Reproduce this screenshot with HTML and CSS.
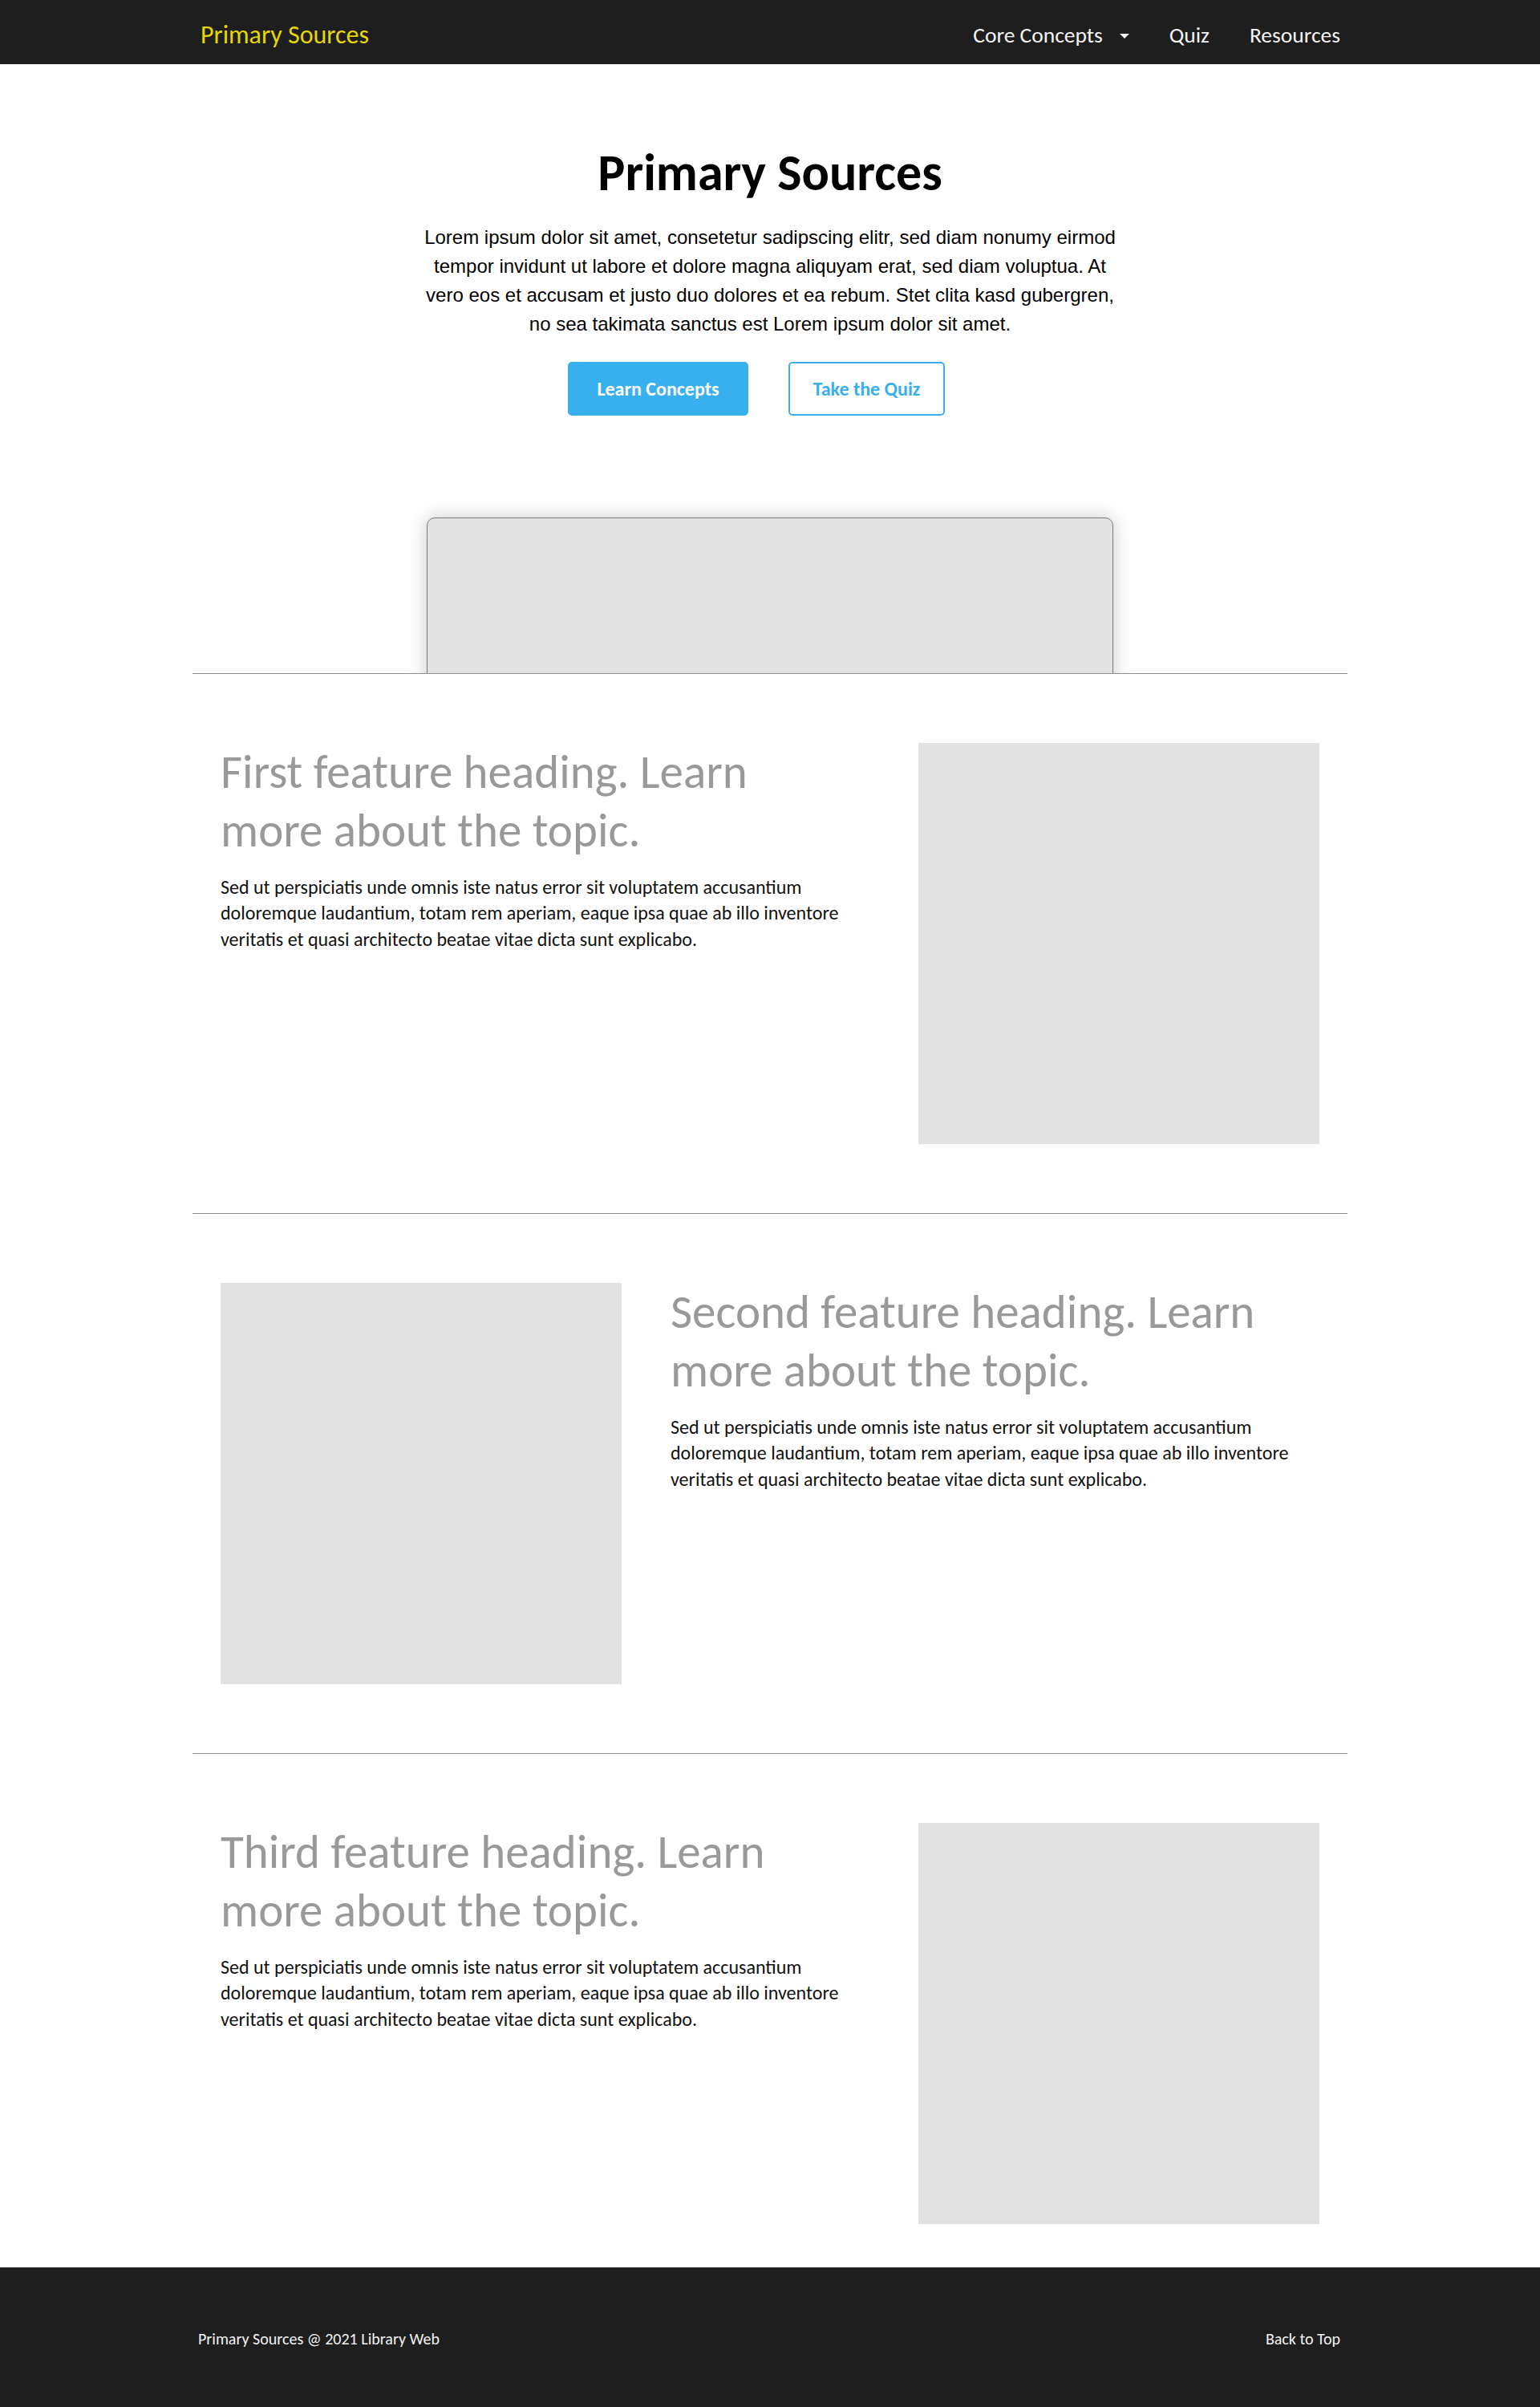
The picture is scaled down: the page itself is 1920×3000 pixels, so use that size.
FILE: index.html
```html
<!DOCTYPE html>
<html lang="en">
<head>
<meta charset="utf-8">
<title>Primary Sources</title>
<link rel="stylesheet" href="styles.css">
</head>
<body>
<header class="navbar">
  <div class="navbar-inner">
    <a class="brand" href="#">Primary Sources</a>
    <nav class="nav">
      <a class="nav-link" href="#">Core Concepts <span class="caret"></span></a>
      <a class="nav-link" href="#">Quiz</a>
      <a class="nav-link" href="#">Resources</a>
    </nav>
  </div>
</header>

<main class="container">
  <section class="hero">
    <h1 class="hero-title">Primary Sources</h1>
    <p class="hero-lead">Lorem ipsum dolor sit amet, consetetur sadipscing elitr, sed diam nonumy eirmod tempor invidunt ut labore et dolore magna aliquyam erat, sed diam voluptua. At vero eos et accusam et justo duo dolores et ea rebum. Stet clita kasd gubergren, no sea takimata sanctus est Lorem ipsum dolor sit amet.</p>
    <div class="hero-actions">
      <a class="btn btn-primary" href="#">Learn Concepts</a>
      <a class="btn btn-outline" href="#">Take the Quiz</a>
    </div>
    <div class="hero-media">
      <div class="hero-card"></div>
    </div>
  </section>

  <section class="feature">
    <div class="feature-text">
      <h2 class="feature-heading">First feature heading. Learn more about the topic.</h2>
      <p class="feature-body">Sed ut perspiciatis unde omnis iste natus error sit voluptatem accusantium doloremque laudantium, totam rem aperiam, eaque ipsa quae ab illo inventore veritatis et quasi architecto beatae vitae dicta sunt explicabo.</p>
    </div>
    <div class="feature-media"></div>
  </section>

  <section class="feature feature-reverse">
    <div class="feature-media"></div>
    <div class="feature-text">
      <h2 class="feature-heading">Second feature heading. Learn more about the topic.</h2>
      <p class="feature-body">Sed ut perspiciatis unde omnis iste natus error sit voluptatem accusantium doloremque laudantium, totam rem aperiam, eaque ipsa quae ab illo inventore veritatis et quasi architecto beatae vitae dicta sunt explicabo.</p>
    </div>
  </section>

  <section class="feature feature-last">
    <div class="feature-text">
      <h2 class="feature-heading">Third feature heading. Learn more about the topic.</h2>
      <p class="feature-body">Sed ut perspiciatis unde omnis iste natus error sit voluptatem accusantium doloremque laudantium, totam rem aperiam, eaque ipsa quae ab illo inventore veritatis et quasi architecto beatae vitae dicta sunt explicabo.</p>
    </div>
    <div class="feature-media"></div>
  </section>
</main>

<footer class="footer">
  <div class="footer-inner">
    <span class="footer-copy">Primary Sources @ 2021 Library Web</span>
    <a class="footer-link" href="#">Back to Top</a>
  </div>
</footer>
</body>
</html>
```

FILE: styles.css
```css
* {
  box-sizing: border-box;
}

html, body {
  margin: 0;
  padding: 0;
}

body {
  background: #ffffff;
  color: #000000;
  font-family: Calibri, Carlito, Lato, "Open Sans", sans-serif;
}

a {
  text-decoration: none;
}

/* ---------- Navbar ---------- */
.navbar {
  background: #1e1e1e;
  height: 80px;
}

.navbar-inner {
  width: 1440px;
  margin: 0 auto;
  height: 80px;
  padding: 7px 9px 0 10px;
  display: flex;
  align-items: center;
  justify-content: space-between;
}

.brand {
  color: #e6d700;
  font-size: 32px;
  line-height: 1;
}

.nav {
  display: flex;
  align-items: center;
  gap: 50px;
}

.nav-link {
  color: #f4f4f4;
  font-size: 27.5px;
  line-height: 1;
  display: flex;
  align-items: center;
}

.caret {
  display: inline-block;
  width: 0;
  height: 0;
  margin-left: 21px;
  margin-top: 2px;
  border-left: 6.5px solid transparent;
  border-right: 6.5px solid transparent;
  border-top: 6.5px solid #f4f4f4;
}

/* ---------- Main ---------- */
.container {
  width: 1440px;
  margin: 0 auto;
}

.hero {
  padding-top: 97px;
  text-align: center;
  border-bottom: 1px solid #8c8c8c;
}

.hero-title {
  margin: 0;
  font-size: 64px;
  line-height: 1.2;
  font-weight: 700;
  color: #000;
}

.hero-lead {
  width: 866px;
  margin: 24px auto 0;
  font-family: "Liberation Sans", Arial, sans-serif;
  font-size: 24px;
  line-height: 36px;
  color: #000;
}

.hero-actions {
  display: flex;
  justify-content: center;
  gap: 50px;
  margin-top: 29px;
  padding-right: 34px;
}

.btn {
  display: flex;
  align-items: center;
  justify-content: center;
  height: 67px;
  border-radius: 5px;
  font-size: 24px;
  font-weight: 700;
  border: 2px solid #39b0ee;
}

.btn-primary {
  width: 225px;
  background: #39b0ee;
  color: #ffffff;
}

.btn-outline {
  width: 195px;
  background: #ffffff;
  color: #39b0ee;
}

.hero-media {
  height: 321px;
  padding-top: 127px;
  overflow: hidden;
  display: flex;
  justify-content: center;
}

.hero-card {
  width: 856px;
  height: 400px;
  flex: none;
  background: #e2e2e2;
  border: 1px solid #7d7d7d;
  border-radius: 10px;
  box-shadow: 0 0 22px rgba(0, 0, 0, 0.22);
}

/* ---------- Features ---------- */
.feature {
  display: grid;
  grid-template-columns: 809px 500px;
  column-gap: 61px;
  padding: 86px 35px 86px;
  border-bottom: 1px solid #8c8c8c;
}

.feature-reverse {
  grid-template-columns: 500px 809px;
}

.feature-last {
  border-bottom: none;
  padding-bottom: 54px;
}

.feature-text {
  padding-right: 20px;
}

.feature-heading {
  margin: 0;
  font-size: 59px;
  line-height: 73px;
  font-weight: 400;
  color: #999999;
}

.feature-body {
  margin: 18px 0 0;
  font-size: 24px;
  line-height: 32.5px;
  color: #111111;
}

.feature-media {
  width: 500px;
  height: 500px;
  background: #e2e2e2;
}

/* ---------- Footer ---------- */
.footer {
  background: #1e1e1e;
  height: 175px;
}

.footer-inner {
  width: 1440px;
  margin: 0 auto;
  height: 175px;
  padding: 4px 9px 0 7px;
  display: flex;
  align-items: center;
  justify-content: space-between;
}

.footer-copy,
.footer-link {
  color: #f2f2f2;
  font-size: 20px;
  line-height: 1;
}
```
